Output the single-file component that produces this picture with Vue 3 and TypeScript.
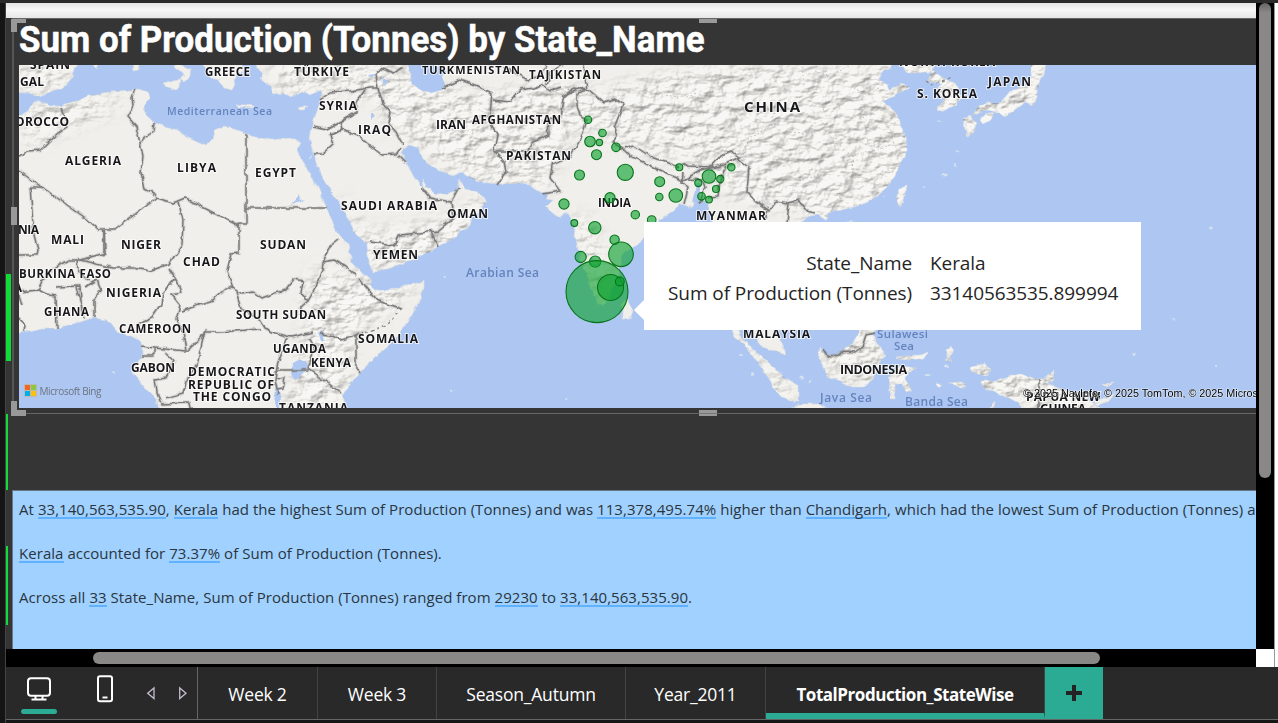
<script setup lang="ts">
interface Label { t: string; x: number; y: number; w: number; s?: number; sea?: boolean }
interface Bubble { x: number; y: number; r: number }

const labels: Label[] = [
  { t: 'SPAIN', x: 30, y: 69, w: 40 },
  { t: 'GAL', x: 20, y: 86, w: 24 },
  { t: 'OROCCO', x: 15, y: 126, w: 54 },
  { t: 'ALGERIA', x: 65, y: 165, w: 56 },
  { t: 'LIBYA', x: 177, y: 172, w: 39 },
  { t: 'EGYPT', x: 255, y: 177, w: 41 },
  { t: 'GREECE', x: 205, y: 76, w: 45, s: 11.5 },
  { t: 'TÜRKIYE', x: 294, y: 76, w: 55 },
  { t: 'SYRIA', x: 319, y: 109.5, w: 38 },
  { t: 'IRAQ', x: 358, y: 134, w: 33 },
  { t: 'IRAN', x: 436, y: 129, w: 30 },
  { t: 'TURKMENISTAN', x: 422, y: 74, w: 98, s: 11 },
  { t: 'TAJIKISTAN', x: 529, y: 79, w: 72, s: 11.5 },
  { t: 'AFGHANISTAN', x: 472, y: 124, w: 89, s: 11.5 },
  { t: 'PAKISTAN', x: 506, y: 160, w: 65 },
  { t: 'SAUDI ARABIA', x: 341, y: 210, w: 96 },
  { t: 'OMAN', x: 447, y: 218, w: 41 },
  { t: 'YEMEN', x: 373, y: 258.5, w: 45 },
  { t: 'INDIA', x: 598, y: 207, w: 33, s: 11.5 },
  { t: 'CHINA', x: 744, y: 112, w: 56, s: 15 },
  { t: 'NORTH KOREA', x: 899, y: 66, w: 96 },
  { t: 'S. KOREA', x: 917, y: 97.5, w: 60 },
  { t: 'JAPAN', x: 988, y: 86, w: 43 },
  { t: 'MYANMAR', x: 696, y: 220, w: 70 },
  { t: 'NIA', x: 18, y: 234, w: 21 },
  { t: 'MALI', x: 51, y: 244, w: 33 },
  { t: 'NIGER', x: 121, y: 249, w: 40 },
  { t: 'CHAD', x: 183, y: 266, w: 37 },
  { t: 'SUDAN', x: 260, y: 249, w: 46 },
  { t: 'BURKINA FASO', x: 19, y: 277.5, w: 92, s: 11.5 },
  { t: 'A', x: 14, y: 292, w: 8, s: 11.5 },
  { t: 'NIGERIA', x: 106, y: 297, w: 55 },
  { t: 'GHANA', x: 44, y: 316, w: 45, s: 11.5 },
  { t: 'CAMEROON', x: 119, y: 333, w: 72, s: 11.5 },
  { t: 'SOUTH SUDAN', x: 236, y: 318.5, w: 90, s: 11.5 },
  { t: 'UGANDA', x: 273, y: 352.5, w: 53, s: 11.5 },
  { t: 'KENYA', x: 311, y: 367, w: 40, s: 11.5 },
  { t: 'SOMALIA', x: 358, y: 342.5, w: 60 },
  { t: 'GABON', x: 131, y: 371.5, w: 44 },
  { t: 'DEMOCRATIC', x: 188, y: 376, w: 87 },
  { t: 'REPUBLIC OF', x: 188, y: 389, w: 86 },
  { t: 'THE CONGO', x: 193, y: 401, w: 78 },
  { t: 'TANZANIA', x: 279, y: 411.5, w: 69 },
  { t: 'MALAYSIA', x: 743, y: 338, w: 67 },
  { t: 'INDONESIA', x: 840, y: 374, w: 67, s: 12.5 },
  { t: 'PAPUA NEW', x: 1026, y: 401, w: 74 },
  { t: 'GUINEA', x: 1040, y: 412.5, w: 46 },
  { t: 'Mediterranean Sea', x: 167, y: 115, w: 105, s: 10.5, sea: true },
  { t: 'Arabian Sea', x: 466, y: 276.5, w: 73, s: 12, sea: true },
  { t: 'Sulawesi', x: 877, y: 338, w: 51, s: 11.5, sea: true },
  { t: 'Sea', x: 894, y: 350, w: 20, s: 11.5, sea: true },
  { t: 'Java Sea', x: 820, y: 401.5, w: 52, s: 12, sea: true },
  { t: 'Banda Sea', x: 905, y: 406, w: 63, s: 12, sea: true },
]

const bubbles: Bubble[] = ([
  [588, 119.7, 3.7], [602.5, 133, 3.8], [590, 141.5, 5.3], [599.4, 142.4, 3.2], [616, 147.3, 4.3],
  [596.5, 154.7, 5], [579.5, 175, 5], [625.3, 172.3, 8.1], [659.7, 181.7, 5], [659.3, 197, 3.7],
  [675.8, 195.5, 6.8], [679.3, 167.3, 3.5], [709, 176.5, 6.8], [698.3, 183, 3.6], [720.3, 179, 3.6],
  [731.3, 167.3, 3.7], [716, 189, 3.5], [701.5, 196.3, 3.8], [709, 199.6, 3.4], [610, 197.7, 5.1],
  [564, 204, 5.1], [574.3, 223, 3.4], [594.8, 227.7, 6.2], [635.3, 214.7, 4.2], [651.7, 220, 4.3],
  [614.6, 239.7, 4.7], [621, 254.3, 12.3], [580.7, 257, 5.6], [595.2, 261.6, 5.6],
  [597, 291.6, 31], [610.5, 287.5, 13], [619.8, 281.5, 4.4],
] as number[][]).map(([x, y, r]) => ({ x, y, r }))

const land: string[] = [
  // Africa
  'M10 120L19 116 28 111 34 101 38 100 50 106 62 106 75 102 90 95 110 92 130 90 138 89 148 92 150 98 144 107 147 116 155 123 165 126 178 130 186 137 206 146 212 139 214 130 224 126 240 131 250 136 270 140 290 138 300 142 297 150 303 163 312 177 318 188 325 203 330 217 337 232 348 245 352 262 361 272 372 280 370 286 376 291 397 289 410 285 424 281 424 288 418 303 405 327 390 345 370 361 360 374 350 383 343 396 347 415 160 415 157 400 147 390 132 373 134 367 142 358 142 343 134 337 117 332 108 320 93 318 80 322 57 328 43 328 10 335Z',
  // Europe
  'M10 60L78 60 72 78 63 88 52 91 40 97 30 94 25 92 10 91Z',
  'M133 60L141 60 139 70 134 71Z', 'M92 63L99 63 97 69Z',
  'M178 60L183 66 191 69 190 75 185 82 180 80 184 74 174 67Z', 'M162 83L172 81 180 80 178 91 168 87Z',
  'M199 60L243 60 242 68 248 71 238 73 235 84 232 90 224 88 219 80 212 78 207 73Z',
  'M236 104L255 106 254 108 238 107Z', 'M298 108L308 105 304 110 299 110Z',
  // Asia
  'M256 60L256 67 262 74 260 79 270 86 272 94 283 93 290 97 300 92 310 94 321 91 320 103 316 114 311 128 309 139 314 153 308 160 315 163 322 178 337 199 348 218 356 235 367 243 368 256 372 272 390 268 410 260 430 252 440 245 457 237 460 231 468 228 471 218 478 213 487 201 478 192 465 189 459 179 457 192 452 193 435 194 427 187 422 179 423 188 416 181 408 166 402 154 405 147 410 145 418 148 424 161 437 170 453 176 463 171 467 177 480 182 497 184 523 183 533 187 542 193 551 192 545 199 553 200 546 207 560 218 568 212 572 220 575 235 580 257 587 277 597 302 603 306 609 299 612 287 619 275 621 256 631 247 643 240 658 221 673 212 681 204 693 208 696 197 707 201 713 224 730 235 745 260 748 290 747 320 755 338 763 347 785 355 783 345 769 321 765 290 775 270 800 300 826 270 810 246 800 230 802 222 810 215 818 214 826 221 828 213 853 207 873 199 887 187 894 178 900 164 907 150 906 141 903 130 897 116 890 107 882 102 893 96 910 87 900 84 889 91 887 85 878 79 884 70 890 69 893 60Z',
  // Korea, Japan, Taiwan
  'M898 60L938 60 932 70 943 78 955 84 961 97 955 105 941 111 938 107 944 101 937 90 942 84 928 81 931 72 908 73Z',
  'M1031 60L1046 60 1043 74 1039 83 1037 97 1033 105 1025 102 1017 108 1005 117 998 112 984 110 973 115 978 107 987 103 1000 103 1009 92 1026 85 1031 77Z',
  'M963 119L970 116 976 123 974 132 968 137 965 128Z', 'M980 121L984 115 993 113 992 119 983 124Z',
  'M896 198L899 189 907 185 905 195 900 207Z',
  'M622 305L627 298 633 311 630 319 622 319Z',
  // Indonesia, Borneo, Sulawesi, New Guinea
  'M726 320L739 332 752 350 760 355 770 365 784 377 798 385 798 401 788 401 773 387 763 369 750 351 735 336Z',
  'M792 408L799 404 820 404 835 415 790 415Z',
  'M820 347L825 355 837 355 853 343 859 333 866 325 878 327 872 335 882 350 885 355 878 365 873 378 865 387 852 387 845 383 829 378 823 366 819 358Z',
  'M896 357L909 356 921 354 929 351 924 358 910 360 900 359Z',
  'M891 373L901 366 916 368 908 373 905 379 909 385 912 390 906 392 902 384 895 384 895 399 891 399 889 382Z',
  'M947 350L951 346 953 352 949 359 953 360 947 362Z',
  'M936 384L941 384 938 387Z', 'M949 383L960 382 967 385 960 386Z',
  'M970 367L984 365 991 370 986 376 975 373Z',
  'M981 381L997 381 1008 377 1020 374 1036 379 1043 379 1054 371 1053 382 1044 382 1061 389 1077 393 1090 401 1110 415 1030 415 1018 402 1002 395 983 387Z',
  'M1103 384L1113 383 1107 387Z', 'M1092 401L1108 398 1115 392 1110 401 1098 405Z', 'M990 408L995 401 994 407Z',
]

const water: string[] = [
  'M407 60L412 82 421 90 431 93 443 90 444 85 441 78 448 72 443 67 434 68 440 60Z',
  'M293 363L301 359 307 363 306 370 300 378 293 380 291 373Z',
  'M274 395L277 383 281 400 280 408 276 408Z',
  'M297 149L303 157 310 159 314 153 317 166 309 164Z',
  'M382 78L387 81 384 86Z', 'M368 75L376 74 372 78Z', 'M371 113L375 116 371 119Z',
  'M692 203L696 185 700 183 700 205Z', 'M318 334L323 331 325 341 321 340Z',
  'M290 206L297 201 297 193 300 200 304 199 298 203Z',
]

const borders: string[] = [
  'M135 89L132 97 133 106 127 117 136 127 140 143 143 156 141 173 145 188 153 193 157 198 115 229 98 229 87 219 19 171',
  'M154 122L153 132 144 138 140 146', 'M19 156L28 151 40 150 48 142 58 133 68 126 61 108',
  'M30 187L42 187M30 187L34 235 38 250 37 255 19 255',
  'M157 198L173 203 185 198 239 226 239 223 246 223 246 134',
  'M104 230L104 253',
  'M178 202L183 220 182 245 169 264 150 271 133 268 113 268 80 260 105 253 104 230',
  'M80 260L68 260 53 269 42 281 38 290 20 292M38 290L50 295 56 296 57 328M56 287L80 286 82 316M76 287L85 318M85 287L97 280 101 289 94 300 94 318M77 260L78 272 90 280',
  'M19 295L22 305M19 318L25 325 24 332',
  'M169 268L175 278 163 292 161 304 152 317 137 324 140 331M169 268L178 282 181 293 172 295 180 305 176 320 183 332 186 351',
  'M239 223L239 253 231 254 227 271 233 288 226 288 213 300 182 311M233 288L241 294 253 292 262 298 275 293 286 290 295 279 303 281 301 293 308 301 301 307 300 315',
  'M246 208L328 208M308 301L316 287 322 270 323 263 329 247 339 239',
  'M236 292L241 309 258 318 264 328 275 333 291 337 309 333 313 332M320 334L330 335 341 340 352 337 362 332M402 309L378 301 366 287 359 277',
  'M323 262L334 260 346 267 356 276', 'M356 335L356 368 360 374M309 338L315 347 308 368 341 393',
  'M205 332L220 332 260 329M187 351L201 338 205 330 197 365 187 378 183 393 165 398',
  'M142 346L154 348 186 351M154 348L154 356 142 356M164 352L174 361 166 377 155 379 157 392 161 404 190 403 191 408',
  'M287 338L283 350 277 366 275 380 278 394M277 370L309 370M277 379L285 377 283 389 277 390',
  'M320 99L330 92 350 91 370 88 378 88 376 75 382 68M378 88L383 103 390 112 388 123 396 132 403 145M382 68L394 73 402 68',
  'M365 90L357 101 356 112 327 129 313 126M356 112L341 122 343 130 358 136 382 155 396 154 401 148M343 130L330 135 333 145 323 154 314 154',
  'M398 155L406 163M422 188L430 198 451 202 459 187M451 202L453 218 438 231 399 235 396 245 370 242M431 231L438 247',
  'M443 88L460 80 475 85 492 93 490 115 492 126 497 134 494 150 504 162 506 172 497 185',
  'M494 151L528 151 531 143 549 135 548 120 560 117 564 95 580 88 586 91M493 100L510 102 520 90 533 88 542 85 550 91 562 88',
  'M504 67L528 80 538 76 548 66M547 86L550 72 563 65M584 65L588 90',
  'M586 90L577 93 577 105 580 116 586 120 580 139 570 157 552 165 550 178 560 191 543 194',
  'M564 97L573 88 589 90 603 102 615 99 623 105 618 118 614 128 617 136 612 143 623 149 630 156 656 168 677 178 682 181 701 170 724 165 739 157 732 152 721 156 711 167 687 166 682 163',
  'M625 148L633 145 651 157 679 167M683 173L682 183 688 188 684 204M688 179L703 180 705 187 700 203M726 166L720 180 718 197 709 198',
  'M738 158L749 167 747 192 756 202 770 211 775 201 789 203 798 200 806 210 815 212M768 211L765 219M789 203L787 222',
  'M823 349L827 356 838 355 843 351 855 352 862 347 866 335 875 333M1039 379L1039 415',
]
const provinces: string[] = [
  'M803 66L803 86 815 90 820 78M826 101L819 118 824 124M864 113L866 135 872 151 890 146M790 132L803 133 823 130 841 144 849 155M852 156L853 175 866 180 889 171M836 200L852 182 852 155 872 151',
  'M815 70L830 77 848 66M850 86L867 95 880 88M742 155L748 139 771 127 775 108M787 202L799 180 822 173M650 94L679 98 696 93M881 117L891 130 894 146',
]
const islets: number[][] = [[939, 121, 3, 1], [957, 152, 2, 2], [956, 164, 1.5, 3], [944, 175, 4, 2], [923, 187, 2, 1], [884, 196, 2, 1], [850, 221, 5, 1], [444, 276, 3, 1.5], [452, 391, 2, 2], [566, 399, 2, 1.5], [113, 372, 3, 1.5], [1212, 228, 3, 2], [1134, 355, 2, 1.5], [1216, 366, 2, 1.5], [741, 355, 3, 1.5], [753, 374, 3, 3], [802, 378, 3, 2], [811, 382, 2, 2], [928, 375, 5, 1.5], [947, 367, 3, 2], [1174, 319, 2, 1]]

const tabs: string[] = ['Week 2', 'Week 3', 'Season_Autumn', 'Year_2011', 'TotalProduction_StateWise']
</script>

<template>
  <div class="app">
    <div class="canvas">
      <div class="ribbon"></div>
      <section class="visual">
        <i class="bar bar-a"></i>
        <div class="frame">
          <svg class="title" width="700" height="46" viewBox="0 0 700 46">
            <text x="5" y="33.3" textLength="685.5" lengthAdjust="spacingAndGlyphs">Sum of Production (Tonnes) by State_Name</text>
          </svg>
          <svg class="map" width="1237" height="343" viewBox="19 65 1237 343">
            <defs>
              <filter id="coast" x="0" y="0" width="1300" height="500" filterUnits="userSpaceOnUse">
                <feTurbulence type="fractalNoise" baseFrequency="0.12" numOctaves="2" seed="4" result="n" />
                <feDisplacementMap in="SourceGraphic" in2="n" scale="5" xChannelSelector="R" yChannelSelector="G" />
              </filter>
              <filter id="relief" x="0" y="0" width="1300" height="500" filterUnits="userSpaceOnUse" color-interpolation-filters="sRGB">
                <feTurbulence type="fractalNoise" baseFrequency="0.06 0.1" numOctaves="4" seed="9" result="n" />
                <feDiffuseLighting in="n" surfaceScale="4" diffuseConstant="1.2" lighting-color="#f4f2ed" result="l">
                  <feDistantLight azimuth="225" elevation="55" />
                </feDiffuseLighting>
                <feComposite in="l" in2="SourceGraphic" operator="in" />
              </filter>
              <filter id="soft" x="-20%" y="-20%" width="140%" height="140%"><feGaussianBlur stdDeviation="9" /></filter>
              <clipPath id="landclip"><path v-for="(d, i) in land" :key="i" :d="d" /></clipPath>
            </defs>
            <rect x="19" y="65" width="1237" height="343" fill="#adc7f2" />
            <g filter="url(#coast)">
              <path v-for="(d, i) in land" :key="i" :d="d" class="land" />
              <ellipse v-for="(e, i) in islets" :key="'i' + i" :cx="e[0]" :cy="e[1]" :rx="e[2] * 0.7" :ry="e[3] * 0.7" fill="#e5ebef" opacity=".7" />
            </g>
            <g clip-path="url(#landclip)">
              <g filter="url(#relief)" opacity=".5">
                <g filter="url(#soft)" fill="#fff">
                  <path d="M270 60L395 65 440 90 490 95 560 80 600 95 640 80 720 65 900 65 900 215 830 225 780 205 735 200 700 165 640 150 580 125 555 160 545 190 465 178 390 125 370 92 280 92Z" />
                  <path d="M310 270L420 285 350 340 345 408 285 408 305 340ZM335 190L370 235 450 220 490 190 470 250 370 270ZM30 107L130 92 110 110 20 145ZM20 65L75 65 60 90 20 90Z" />
                  <path d="M570 215L590 220 610 295 600 305ZM720 320L800 400 770 400ZM820 325L890 325 880 385 830 380ZM890 350L1110 370 1100 410 890 400ZM890 60L1050 60 1030 140 890 210Z" />
                </g>
              </g>
            </g>
            <g filter="url(#coast)">
              <path v-for="(d, i) in water" :key="i" :d="d" fill="#adc7f2" />
              <path v-for="(d, i) in borders" :key="'h' + i" :d="d" class="halo" />
              <path v-for="(d, i) in borders" :key="'b' + i" :d="d" class="border" />
              <path v-for="(d, i) in provinces" :key="'p' + i" :d="d" class="province" />
              <path d="M402 309L387 324 372 331 358 334" class="disputed" />
              <path d="M926 81L932 85 952 77" class="disputed" />
            </g>
            <text
              v-for="(l, i) in labels" :key="'l' + i" :x="l.x" :y="l.y" :textLength="l.w"
              :font-size="l.s ?? 12" :class="l.sea ? 'sea' : 'country'"
            >{{ l.t }}</text>
            <g class="bing">
              <rect x="24" y="384" width="13" height="13" fill="#b9bbb0" />
              <rect x="25" y="385" width="5" height="5" fill="#f1652a" /><rect x="31" y="385" width="5" height="5" fill="#8dc63f" />
              <rect x="25" y="391" width="5" height="5" fill="#00aeef" /><rect x="31" y="391" width="5" height="5" fill="#fdc010" />
              <text x="39.5" y="394.7" textLength="62">Microsoft Bing</text>
            </g>
            <text class="credit" x="1023" y="397" textLength="235" lengthAdjust="spacingAndGlyphs">© 2025 NavInfo, © 2025 TomTom, © 2025 Micros</text>
            <circle v-for="(b, i) in bubbles" :key="'c' + i" :cx="b.x" :cy="b.y" :r="b.r" class="bubble" />
          </svg>
          <i class="grip top"></i><i class="grip bottom"></i><i class="grip left"></i>
          <i class="corner nw"></i><i class="corner sw"></i>
          <div class="tooltip">
            <span class="key">State_Name</span><span class="val">Kerala</span>
            <span class="key">Sum of Production (Tonnes)</span><span class="val">33140563535.899994</span>
          </div>
        </div>
      </section>
      <div class="gap"><i class="bar bar-b"></i></div>
      <section class="story">
        <i class="bar bar-c"></i>
        <div class="prose">
          <p>At <u>33,140,563,535.90</u>, <u>Kerala</u> had the highest Sum of Production (Tonnes) and was <u>113,378,495.74%</u> higher than <u>Chandigarh</u>, which had the lowest Sum of Production (Tonnes) a</p>
          <p><u>Kerala</u> accounted for <u>73.37%</u> of Sum of Production (Tonnes).</p>
          <p>Across all <u>33</u> State_Name, Sum of Production (Tonnes) ranged from <u>29230</u> to <u>33,140,563,535.90</u>.</p>
        </div>
      </section>
      <div class="hscroll"><div class="hthumb"></div></div>
    </div>
    <div class="vscroll"><div class="vtrack"><div class="vthumb"></div></div></div>
    <footer class="tabs">
      <div class="tools">
        <svg width="191" height="52" viewBox="0 0 191 52" fill="none">
          <rect x="22" y="11.2" width="22" height="17.6" rx="3" stroke="#fff" stroke-width="2" />
          <path d="M29.5 29v3M36.5 29v3M25.5 32.5h15" stroke="#fff" stroke-width="2" />
          <rect x="15" y="42" width="36" height="5" rx="2.5" fill="#2bab93" />
          <rect x="92" y="9.3" width="14" height="25" rx="2" stroke="#fff" stroke-width="2" />
          <path d="M96.5 30.5h5" stroke="#fff" stroke-width="2" />
          <path d="M148 21v10.5L141.7 26.2Z" stroke="#c4bccd" stroke-width="1.3" />
          <path d="M173.7 21v10.5L180 26.2Z" stroke="#c4bccd" stroke-width="1.3" />
        </svg>
      </div>
      <div v-for="(t, i) in tabs" :key="t" class="tab" :class="{ active: i === 4 }"><span>{{ t }}</span></div>
      <div class="add">
        <svg width="18" height="18" viewBox="0 0 18 18"><path d="M9 1v16M1 9h16" stroke="#232323" stroke-width="4" /></svg>
      </div>
    </footer>
  </div>
</template>

<style>
body { background: #161616; overflow: hidden; }
</style>

<style scoped>
.app {
  box-sizing: border-box; width: 1278px; height: 723px; padding: 3px 0 0 6px;
  display: grid; grid-template-columns: 1250px 22px; grid-template-rows: 664px 52px;
  background: linear-gradient(#2b2b2b 0 3px, transparent 3px), linear-gradient(90deg, #151515 0 5px, #444 5px 6px, transparent 6px), #161616;
  overflow: hidden; font-family: "Open Sans", "Noto Sans", sans-serif;
}
.canvas { overflow: hidden; background: #353535; display: flex; flex-direction: column; }
.ribbon { height: 15px; flex: none; background: linear-gradient(#e3e3e3, #f8f8f8 45%, #e6e6e6); }
.visual { height: 396px; flex: none; display: flex; position: relative; }
.bar { position: absolute; left: 0; background: #10dc38; }
.bar-a { top: 256px; width: 5px; height: 87px; }
.bar-b { top: 0; width: 2px; height: 76px; }
.bar-c { top: 56px; width: 2px; height: 79px; }
.frame {
  position: relative; margin-left: 6px; width: 1244px; height: 394px;
  border: 1px solid #666; border-left: 2px solid #555; border-right: 0; display: flex; flex-direction: column;
}
.title { display: block; height: 46px; flex: none; }
.title text { font: 700 36px Roboto, sans-serif; fill: #fff; stroke: #fff; stroke-width: .5px; }
.map { display: block; margin-left: 5px; flex: none; }
.land { fill: #f0efeb; stroke: #d7dde2; stroke-width: .7; }
.halo { fill: none; stroke: #999; stroke-opacity: .3; stroke-width: 3.4; stroke-linejoin: round; }
.border { fill: none; stroke: #7c7c7c; stroke-width: 1.5; stroke-linejoin: round; }
.province { fill: none; stroke: #b5b5b5; stroke-width: .8; stroke-dasharray: 2 2; }
.disputed { fill: none; stroke: #888; stroke-width: 1.4; stroke-dasharray: 3 3; }
.country { font-family: "Open Sans", sans-serif; font-weight: 700; fill: #17171b; stroke: #fff; stroke-opacity: .7; stroke-width: 2px; paint-order: stroke; }
.sea { font-family: "Open Sans", sans-serif; font-weight: 600; fill: #6583bd; }
.bing text { font: 10px "Open Sans", sans-serif; fill: #6d7380; }
.credit { font: 10.5px "Liberation Sans", sans-serif; fill: #000; stroke: #fff; stroke-opacity: .6; stroke-width: 1.2px; paint-order: stroke; }
.bubble { fill: #0aa02d; fill-opacity: .62; stroke: #08751a; stroke-width: 1.1; }
.grip { position: absolute; background: linear-gradient(#999 0 3px, #777 3px 4px, #999 4px); }
.grip.top { left: 685px; top: 0; width: 18px; height: 4px; background: #999; }
.grip.bottom { left: 685px; bottom: -3px; width: 18px; height: 6px; }
.grip.left { left: -3px; top: 188px; width: 6px; height: 18px; background: #999; }
.corner { position: absolute; left: -3px; width: 9px; height: 9px; border: 0 solid #999; }
.corner.nw { top: 0; border-width: 4px 0 0 6px; }
.corner.sw { bottom: -3px; border-width: 0 0 6px 6px; }
.tooltip {
  position: absolute; left: 630px; top: 203px; width: 497px; height: 108px; background: #fff; color: #252423;
  display: grid; grid-template-columns: 268px auto; grid-template-rows: 30px 30px; align-content: start;
  column-gap: 18px; padding-top: 26px; box-sizing: border-box; font-size: 19px; line-height: 30px; letter-spacing: -.08px; white-space: nowrap;
}
.tooltip::before { content: ""; position: absolute; left: -10px; top: 78px; border: 10px solid transparent; border-left: 0; border-right-color: #fff; }
.key { text-align: right; }
.gap { height: 76px; flex: none; position: relative; }
.story { position: relative; height: 159px; flex: none; padding-left: 6px; }
.prose { box-sizing: border-box; height: 159px; overflow: hidden; background: #a0d1ff; border-top: 1px solid #66778c; border-left: 1px solid #66778c; padding: 7px 0 0 6px; }
.prose p { margin: 0 0 22px; line-height: 22px; font-size: 15px; letter-spacing: .05px; color: #2b3540; white-space: nowrap; }
.prose u { text-decoration: none; background: linear-gradient(#60b1ff, #60b1ff) 0 100% / 100% 2px no-repeat; }
.hscroll { height: 18px; background: #000; padding: 3px 0 0 87px; box-sizing: border-box; flex: none; }
.hthumb { width: 1007px; height: 12px; border-radius: 6px; background: #8a8886; }
.vtrack { box-sizing: border-box; width: 18px; height: 646px; background: #000; padding-left: 3px; }
.vthumb { width: 12px; height: 475px; border-radius: 6px; background: linear-gradient(#666, #8a8886 10px); }
.vscroll { background: linear-gradient(90deg, transparent 18px, #999 18px 19px, transparent 19px) #fff; }
.tabs { grid-column: 1 / 3; display: grid; grid-template-columns: 192px 120px 119px 189px 140px 279px 58px; background: #292929; border-bottom: 1px solid #666; height: 52px; }
.tools { border-right: 1px solid #666; }
.tools svg { display: block; }
.tab { box-sizing: border-box; border-right: 1px solid #434343; display: flex; align-items: center; justify-content: center; color: #fff; font-size: 17.5px; letter-spacing: -.2px; white-space: nowrap; padding-top: 2px; }
.tab.active { font-weight: 700; font-size: 17px; letter-spacing: -.46px; border-bottom: 6px solid #2bab93; padding-top: 8px; }
.add { background: #2bab93; display: flex; align-items: center; justify-content: center; }
</style>
